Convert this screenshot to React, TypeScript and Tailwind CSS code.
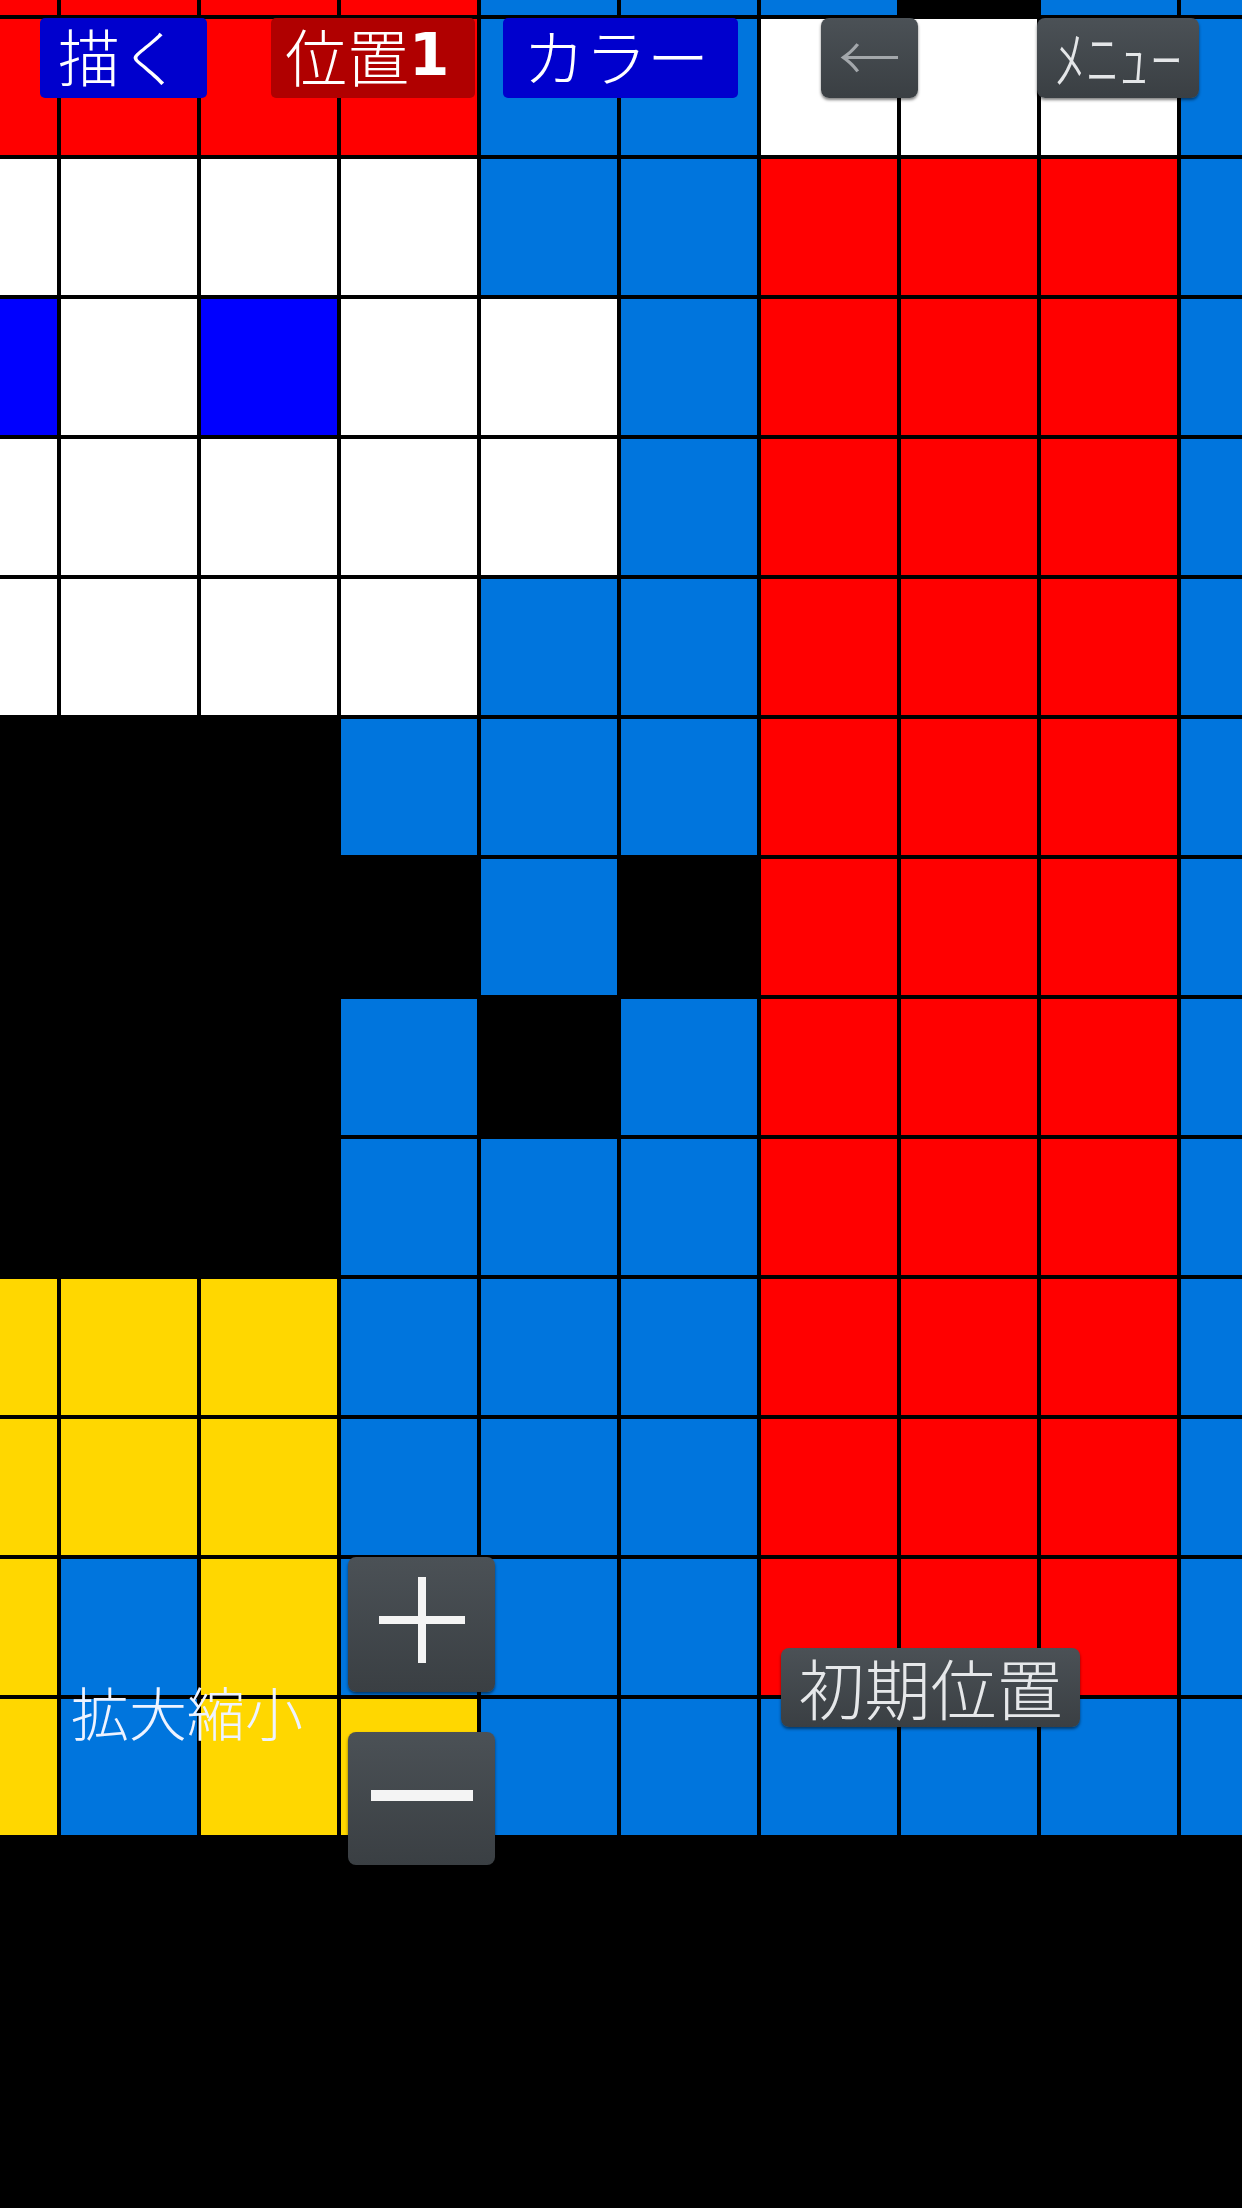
const R = 'bg-[#ff0000]'
const B = 'bg-[#0075dd]'
const W = 'bg-white'
const K = 'bg-black'
const Y = 'bg-[#ffd700]'
const P = 'bg-[#0000ff]'

// 10 columns x 14 rows, first row/column are cut off by the screen edge
const CELLS: string[][] = [
  [R, R, R, R, B, B, B, K, B, B],
  [R, R, R, R, B, B, W, W, W, B],
  [W, W, W, W, B, B, R, R, R, B],
  [P, W, P, W, W, B, R, R, R, B],
  [W, W, W, W, W, B, R, R, R, B],
  [W, W, W, W, B, B, R, R, R, B],
  [K, K, K, B, B, B, R, R, R, B],
  [K, K, K, K, B, K, R, R, R, B],
  [K, K, K, B, K, B, R, R, R, B],
  [K, K, K, B, B, B, R, R, R, B],
  [Y, Y, Y, B, B, B, R, R, R, B],
  [Y, Y, Y, B, B, B, R, R, R, B],
  [Y, B, Y, B, B, B, R, R, R, B],
  [Y, B, Y, Y, B, B, B, B, B, B],
]

const greyBtn =
  'flex items-center justify-center rounded-[8px] bg-gradient-to-b from-[#4b5156] to-[#3a3f43] shadow-[0_2px_3px_rgba(0,0,0,0.5)]'

function PixelGrid() {
  return (
    <div className="-ml-[79px] -mt-[121px] grid w-max grid-cols-[repeat(10,136px)] auto-rows-[136px] gap-[4px]">
      {CELLS.flatMap((row, r) =>
        row.map((c, i) => <div key={`${r}-${i}`} className={c} />),
      )}
    </div>
  )
}

function Toolbar() {
  return (
    <div className="absolute left-0 top-[18px] flex h-[80px] items-stretch text-[62px] font-light leading-none">
      <button className="ml-[40px] flex w-[167px] items-center rounded-[5px] bg-[#0000cd] pb-[6px] pl-[18px] text-white">
        描く
      </button>
      <button className="ml-[64px] flex w-[204px] items-center rounded-[5px] bg-[#b00000] pb-[6px] pl-[14px] text-white">
        位置<span className="font-['DejaVu_Sans'] font-bold text-[58px]">1</span>
      </button>
      <button className="ml-[28px] flex w-[235px] items-center rounded-[5px] bg-[#0000cd] pb-[6px] pl-[20px] text-white">
        カラー
      </button>
      <button className={`ml-[83px] w-[97px] pb-[6px] text-[#a3a7ab] ${greyBtn}`}>←</button>
      <button className={`ml-[119px] w-[162px] pb-[6px] text-[#e4e6e8] text-[64px] ${greyBtn}`}>ﾒﾆｭｰ</button>
    </div>
  )
}

function ZoomControls() {
  return (
    <div className="absolute left-[71px] top-[1557px] flex items-center">
      <span className="text-[58px] font-light leading-none text-[#eef3ff]">拡大縮小</span>
      <div className="ml-[45px] flex flex-col gap-[40px]">
        <button className={`h-[135px] w-[147px] ${greyBtn}`}>
          <svg width="86" height="86" viewBox="0 0 86 86" className="-mt-[10px]">
            <rect x="0" y="39" width="86" height="8" fill="#f4f4f4" />
            <rect x="39" y="0" width="8" height="86" fill="#f4f4f4" />
          </svg>
        </button>
        <button className={`h-[133px] w-[147px] ${greyBtn}`}>
          <svg width="102" height="11" viewBox="0 0 102 11" className="-mt-[6px]">
            <rect x="0" y="0" width="102" height="11" fill="#f4f4f4" />
          </svg>
        </button>
      </div>
    </div>
  )
}

export default function App() {
  return (
    <div className="relative h-[2208px] w-[1242px] overflow-hidden bg-black font-['Noto_Sans_CJK_JP','Noto_Sans',sans-serif]">
      <PixelGrid />
      <Toolbar />
      <ZoomControls />
      <button
        className={`absolute left-[781px] top-[1648px] h-[79px] w-[299px] pb-[4px] text-[66px] font-light leading-none text-[#e6e8ea] ${greyBtn}`}
      >
        初期位置
      </button>
    </div>
  )
}
